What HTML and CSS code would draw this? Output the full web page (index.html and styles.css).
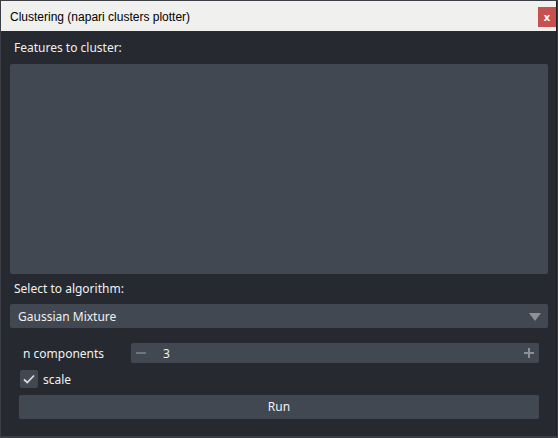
FILE: index.html
```html
<!DOCTYPE html>
<html>
<head>
<meta charset="utf-8">
<link rel="stylesheet" href="styles.css">
</head>
<body>
<div class="window">
  <div class="titlebar">
    <span class="title">Clustering (napari clusters plotter)</span>
    <span class="close">x</span>
  </div>
  <div class="content">
    <div class="label first">Features to cluster:</div>
    <div class="listbox"></div>
    <div class="label second">Select to algorithm:</div>
    <div class="combo">
      <span>Gaussian Mixture</span>
      <svg class="arrow" width="12" height="8" viewBox="0 0 12 8"><path d="M0 0 H12 L6 8 Z" fill="#8c9198"/></svg>
    </div>
    <div class="form">
      <div class="row">
        <span class="rowlabel">n components</span>
        <div class="spin">
          <svg class="minus" width="10" height="2" viewBox="0 0 10 2"><rect width="10" height="2" fill="#6e747c"/></svg>
          <span class="value">3</span>
          <svg class="plus" width="10" height="10" viewBox="0 0 10 10"><rect x="0" y="4" width="10" height="2" fill="#8c9198"/><rect x="4" y="0" width="2" height="10" fill="#8c9198"/></svg>
        </div>
      </div>
      <div class="checkrow">
        <span class="checkbox"><svg width="12" height="10" viewBox="0 0 12 10"><path d="M1 5.5 L4.3 8.5 L11 1.5" fill="none" stroke="#d6d9dc" stroke-width="1.8"/></svg></span>
        <span class="checklabel">scale</span>
      </div>
      <div class="button">Run</div>
    </div>
  </div>
</div>
</body>
</html>
```
FILE: styles.css
```css
html, body {
  margin: 0;
  padding: 0;
}
body {
  width: 558px;
  height: 438px;
  background: #3b3e44;
  overflow: hidden;
  font-family: "Noto Sans", "Open Sans", sans-serif;
  padding-top: 1px;
  padding-left: 1px;
  box-sizing: border-box;
}
.window {
  width: 556px;
  height: 435px;
  background: #262930;
  border-right: 1px solid #1d1f24;
  box-sizing: border-box;
  display: flex;
  flex-direction: column;
}
.titlebar {
  height: 30px;
  background: #f0f0ee;
  display: flex;
  align-items: center;
  justify-content: space-between;
  padding-left: 9px;
  flex: none;
}
.title {
  font-family: "Liberation Sans", Arial, sans-serif;
  font-size: 12px;
  color: #000;
  line-height: 16px;
  margin-top: 1px;
}
.close {
  width: 18px;
  height: 20px;
  background: #c75050;
  color: #fff;
  font-weight: bold;
  font-size: 11px;
  line-height: 20px;
  text-align: center;
  margin-top: 2px;
}
.content {
  padding: 8px 0 0 9px;
  color: #f0f1f2;
  font-size: 12px;
}
.label {
  line-height: 17px;
  padding-left: 4px;
}
.label.first {
  margin-bottom: 8px;
}
.listbox {
  width: 538px;
  height: 210px;
  background: #414851;
  border-radius: 2px;
}
.label.second {
  margin-top: 6px;
  margin-bottom: 7px;
}
.combo {
  width: 538px;
  height: 24px;
  background: #414851;
  border-radius: 2px;
  display: flex;
  align-items: center;
  justify-content: space-between;
  padding: 0 7px 0 8px;
  box-sizing: border-box;
}
.arrow {
  margin-top: 1px;
}
.form {
  padding: 15px 0 0 9px;
  width: 520px;
}
.row {
  display: flex;
  align-items: center;
  height: 20px;
}
.rowlabel {
  width: 108px;
  padding-left: 4px;
  flex: none;
}
.spin {
  flex: 1;
  height: 20px;
  background: #414851;
  border-radius: 2px;
  display: flex;
  align-items: center;
  padding: 0 5px;
}
.minus {
  margin-right: 17px;
}
.value {
  flex: 1;
}
.checkrow {
  display: flex;
  align-items: center;
  margin-top: 7px;
  height: 18px;
}
.checkbox {
  width: 18px;
  height: 18px;
  margin-left: 1px;
  background: #414851;
  border-radius: 2px;
  display: flex;
  align-items: center;
  justify-content: center;
}
.checklabel {
  margin-left: 5px;
}
.button {
  margin-top: 7px;
  height: 24px;
  background: #414851;
  border-radius: 2px;
  text-align: center;
  line-height: 24px;
}
```
